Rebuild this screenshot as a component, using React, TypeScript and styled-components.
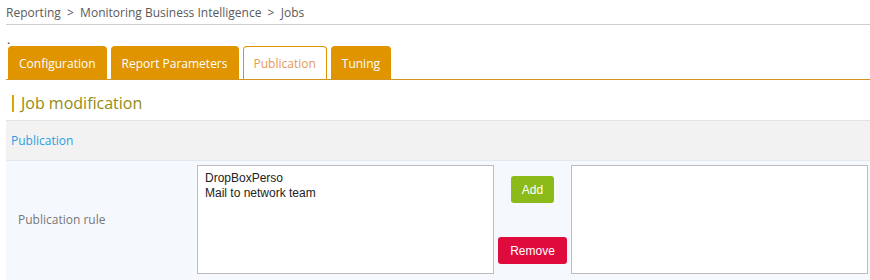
import React from 'react';
import styled, { createGlobalStyle } from 'styled-components';

const GlobalStyle = createGlobalStyle`
  body {
    margin: 0;
    background: #fff;
    font-family: "Open Sans", "Liberation Sans", sans-serif;
  }
`;

const Page = styled.div`
  padding-left: 6px;
  width: 864px;
  overflow: hidden;
`;

const Breadcrumb = styled.div`
  height: 24px;
  display: flex;
  align-items: center;
  border-bottom: 1px solid #cfcfcf;
  font-size: 12px;
  color: #5a5a5a;
  white-space: pre;
`;

const Dot = styled.div`
  height: 13px;
  padding-top: 8px;
  padding-left: 1px;
  font-size: 12px;
  line-height: 13px;
  color: #333;
`;

const TabBar = styled.div`
  display: flex;
  gap: 4px;
  padding-left: 2px;
  border-bottom: 1px solid #d4941c;
`;

const Tab = styled.div<{ $active?: boolean }>`
  height: 33px;
  box-sizing: border-box;
  display: flex;
  align-items: center;
  padding: 0 10px;
  border-radius: 4px 4px 0 0;
  font-size: 12px;
  background: ${p => (p.$active ? '#fff' : '#e09400')};
  color: ${p => (p.$active ? '#e49a55' : '#fff')};
  border: 1px solid #e09400;
  border-bottom: none;
`;

const Heading = styled.div`
  height: 40px;
  box-sizing: border-box;
  display: flex;
  align-items: center;
  gap: 7px;
  padding: 6px 0 0 6px;
  font-size: 16px;
  color: #958a12;
`;

const Bar = styled.span`
  width: 2px;
  height: 17px;
  background: #d6a800;
`;

const SectionBand = styled.div`
  height: 39px;
  display: flex;
  align-items: center;
  padding-left: 5px;
  background: #f2f2f2;
  border-top: 1px solid #e3e3e3;
  border-bottom: 1px solid #e3e7ee;
  font-size: 12px;
  color: #2a9fe0;
`;

const FieldRow = styled.div`
  display: grid;
  grid-template-columns: 191px 297px 77px 297px;
  align-items: center;
  padding: 4px 0 10px;
  background: #f5f9fe;
`;

const Label = styled.div`
  padding-left: 12px;
  font-size: 12px;
  color: #777;
`;

const ListBox = styled.div`
  height: 109px;
  box-sizing: border-box;
  border: 1px solid #bdbdbd;
  background: #fff;
  padding: 5px 7px;
  font-family: "Liberation Sans", Arial, sans-serif;
  font-size: 12px;
  line-height: 15px;
  color: #222;
`;

const ButtonColumn = styled.div`
  height: 109px;
  box-sizing: border-box;
  display: flex;
  flex-direction: column;
  align-items: center;
  justify-content: space-between;
  padding: 11px 0 10px;
`;

const ActionButton = styled.button<{ $tone: 'add' | 'remove' }>`
  height: 27px;
  padding: 0 ${p => (p.$tone === 'add' ? '11px' : '12px')};
  border: none;
  border-radius: 3px;
  background: ${p => (p.$tone === 'add' ? '#8cba18' : '#e00b3d')};
  color: #fff;
  font-family: "Liberation Sans", Arial, sans-serif;
  font-size: 12px;
`;

export default function App() {
  return (
    <>
      <GlobalStyle />
      <Page>
        <Breadcrumb>{'Reporting  >  Monitoring Business Intelligence  >  Jobs'}</Breadcrumb>
        <Dot>.</Dot>
        <TabBar>
          <Tab>Configuration</Tab>
          <Tab>Report Parameters</Tab>
          <Tab $active>Publication</Tab>
          <Tab>Tuning</Tab>
        </TabBar>
        <Heading>
          <Bar />
          Job modification
        </Heading>
        <SectionBand>Publication</SectionBand>
        <FieldRow>
          <Label>Publication rule</Label>
          <ListBox>
            <div>DropBoxPerso</div>
            <div>Mail to network team</div>
          </ListBox>
          <ButtonColumn>
            <ActionButton $tone="add">Add</ActionButton>
            <ActionButton $tone="remove">Remove</ActionButton>
          </ButtonColumn>
          <ListBox />
        </FieldRow>
      </Page>
    </>
  );
}
